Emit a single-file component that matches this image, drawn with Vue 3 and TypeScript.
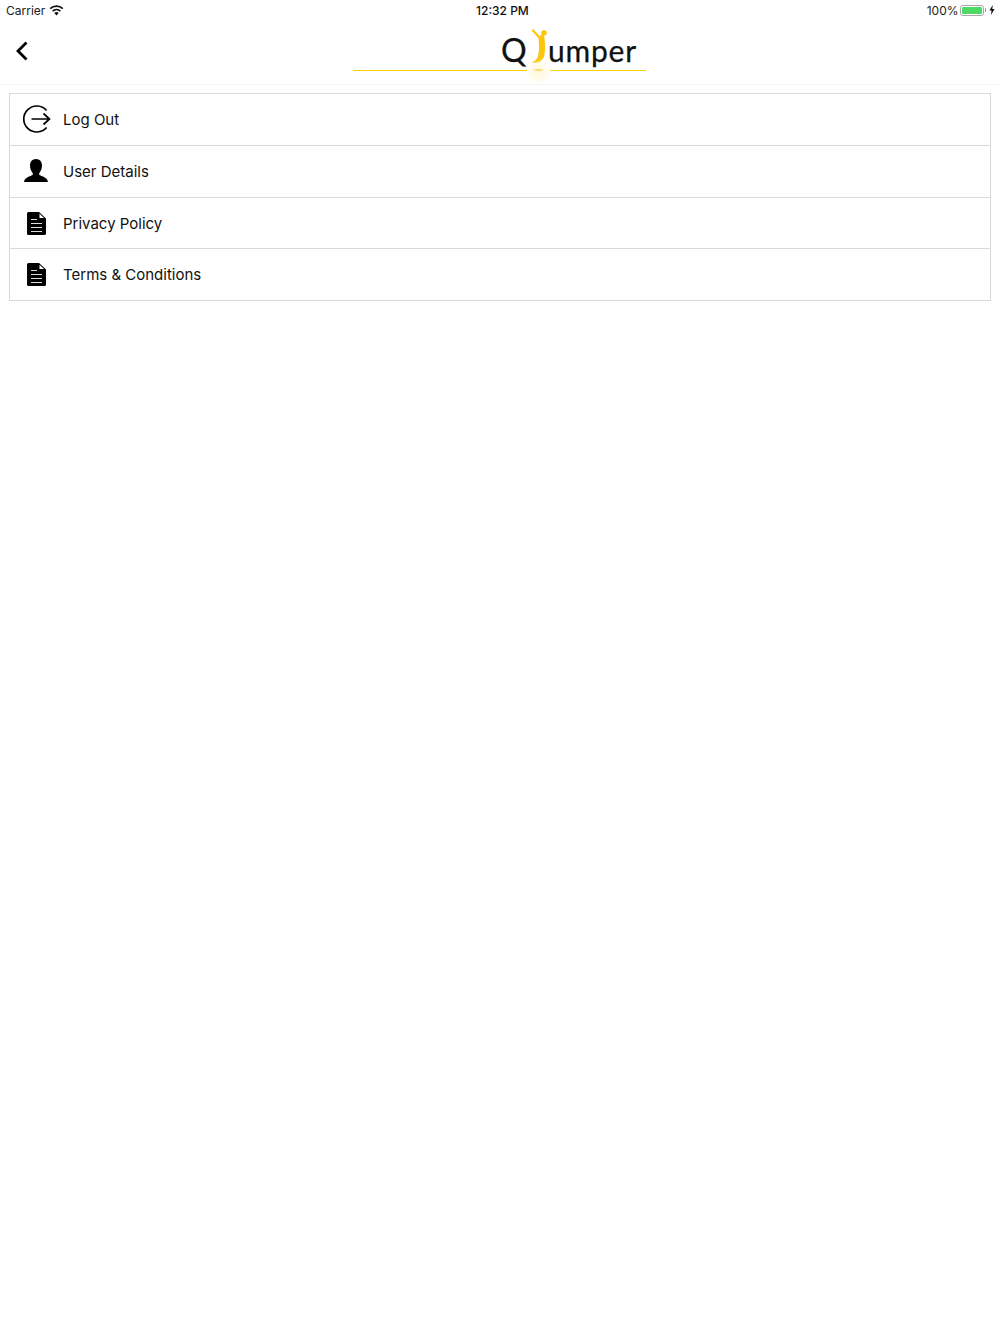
<script setup lang="ts">
interface MenuItem {
  label: string;
  icon: 'logout' | 'user' | 'doc';
}

const items: MenuItem[] = [
  { label: 'Log Out', icon: 'logout' },
  { label: 'User Details', icon: 'user' },
  { label: 'Privacy Policy', icon: 'doc' },
  { label: 'Terms & Conditions', icon: 'doc' }
];
</script>

<template>
  <div class="screen">
    <div class="status">
      <div class="status__left">
        <span>Carrier</span>
        <svg width="15" height="11" viewBox="0 0 15 11">
          <path d="M7.5 10.6 5.3 8.1a3.2 3.2 0 0 1 4.4 0Z" fill="#111" />
          <path d="M3.6 6.2a5.8 5.8 0 0 1 7.8 0" fill="none" stroke="#111" stroke-width="1.7" />
          <path d="M1.2 3.6a9.2 9.2 0 0 1 12.6 0" fill="none" stroke="#111" stroke-width="1.7" />
        </svg>
      </div>
      <span class="status__time">12:32 PM</span>
      <div class="status__right">
        <span>100%</span>
        <div class="battery"><div class="battery__fill"></div></div>
        <div class="battery__tip"></div>
        <svg class="bolt" width="6" height="10" viewBox="0 0 6 10">
          <path d="M3.8 0 0.4 5.6h2.1L2 10l3.6-6H3.3Z" fill="#111" />
        </svg>
      </div>
    </div>

    <header class="nav">
      <button class="nav__back" type="button" aria-label="Back">
        <svg width="14" height="20" viewBox="0 0 14 20">
          <path d="M11.5 1.5 3 10l8.5 8.5" fill="none" stroke="#000" stroke-width="2.8" />
        </svg>
      </button>
      <div class="logo">
        <div class="logo__word">
          <span class="logo__q">Q</span>
          <svg class="logo__j" width="21" height="38" viewBox="0 0 21 38">
            <path d="M4 1.5 11 9 15 4.500" fill="none" stroke="#fcc60d" stroke-width="2.2" stroke-linecap="round" />
            <circle cx="15" cy="4" r="2.800" fill="#fcc60d" />
            <path d="M9.500 8C10 15 10.500 20 9.500 25C8.500 30 6.500 32 2.500 33.500C9.500 34.500 14 32 15.500 25.500C16.500 20 16 12 15 6Z" fill="#fcc60d" />
          </svg>
          <span class="logo__rest">umper</span>
        </div>
        <div class="logo__rule">
          <span class="logo__line logo__line--left"></span>
          <span class="logo__glow"></span>
          <span class="logo__line logo__line--right"></span>
        </div>
      </div>
    </header>

    <ul class="menu">
      <li v-for="item in items" :key="item.label" class="menu__row">
        <span class="menu__icon">
          <svg v-if="item.icon === 'logout'" width="30" height="30" viewBox="-1 0 30 30">
            <path d="M24.6 6.5A13 13 0 1 0 24.6 23.5" fill="none" stroke="#000" stroke-width="1.7" />
            <path d="M9.5 15H27.5M21.5 9.5l6 5.500-6 5.500" fill="none" stroke="#000" stroke-width="1.7" />
          </svg>
          <svg v-else-if="item.icon === 'user'" width="26" height="26" viewBox="0 0 26 26">
            <path d="M13 1c3.700 0 6 2.800 6 6.600 0 3-1.100 5.600-2.600 7.300-.5.7-.3 1.900.6 2.400 2.600 1.400 7.400 2.100 8 6.700H1c.6-4.600 5.400-5.300 8-6.700.9-.5 1.100-1.700.6-2.400C8.100 13.200 7 10.600 7 7.600 7 3.800 9.300 1 13 1Z" fill="#000" />
          </svg>
          <svg v-else width="19" height="23" viewBox="0 0 19 23">
            <path d="M1.500 0H12L19 6.500V21.500A1.500 1.500 0 0 1 17.500 23H1.500A1.500 1.500 0 0 1 0 21.500V1.500A1.500 1.500 0 0 1 1.500 0Z" fill="#000" />
            <path d="M12.500 1.800 17 6H12.500Z" fill="#fff" />
            <path d="M4 7.500H10M4 11.500H15M4 15.500H15M4 19.500H15" stroke="#dcdcdc" stroke-width="1.200" fill="none" />
          </svg>
        </span>
        <span class="menu__label">{{ item.label }}</span>
      </li>
    </ul>
  </div>
</template>

<style scoped>
.screen {
  width: 1000px;
  height: 1334px;
  background: #fff;
  font-family: Inter, "Liberation Sans", sans-serif;
  color: #111;
}

.status {
  height: 20px;
  display: flex;
  align-items: center;
  justify-content: space-between;
  padding: 0 6px;
  font-size: 12px;
  position: relative;
}

.status__left,
.status__right {
  display: flex;
  align-items: center;
}

.status__left {
  gap: 4px;
  color: #222;
}

.status__time {
  position: absolute;
  left: 476px;
  font-weight: 500;
  color: #111;
}

.status__right {
  color: #222;
}

.battery {
  width: 24px;
  height: 11px;
  margin-left: 1px;
  border: 1px solid #a8a8a8;
  border-radius: 2.5px;
  padding: 1px;
  box-sizing: border-box;
}

.battery__fill {
  height: 100%;
  background: #4cd964;
  border-radius: 1px;
}

.battery__tip {
  width: 1.500px;
  height: 4px;
  background: #9a9a9a;
  margin-left: 1px;
}

.bolt {
  margin-left: 3px;
  margin-right: -1px;
}

.nav {
  height: 64px;
  position: relative;
  display: flex;
  justify-content: center;
  border-bottom: 1px solid #f6f6f6;
}

.nav__back {
  position: absolute;
  left: 15px;
  top: 21px;
  padding: 0;
  border: 0;
  background: none;
  display: flex;
}

.logo {
  width: 293px;
  margin-right: 1px;
}

.logo__word {
  display: flex;
  align-items: flex-start;
  height: 49px;
  padding-left: 148px;
  font-family: Lato, sans-serif;
  font-size: 30px;
  color: #111;
  line-height: 60px;
  -webkit-text-stroke: 0.25px #111;
}

.logo__q {
  width: 27px;
  font-size: 32px;
}

.logo__j {
  margin-top: 9px;
  margin-left: 1px;
  flex: none;
}

.logo__rest {
  letter-spacing: 0.8px;
  margin-left: -2px;
}

.logo__rule {
  display: flex;
  align-items: center;
  height: 3px;
}

.logo__line {
  display: block;
  height: 1px;
  background: #ffcf00;
}

.logo__line--left {
  width: 174px;
}

.logo__line--right {
  width: 96px;
}

.logo__glow {
  position: relative;
  width: 23px;
  height: 3px;
  display: block;
  background: radial-gradient(ellipse 6px 1.500px at 50% 30%, #f8b800 0%, rgba(252, 211, 77, 0) 100%);
}

.logo__glow::after {
  content: "";
  position: absolute;
  left: -3px;
  right: -3px;
  top: -12px;
  height: 28px;
  background: radial-gradient(ellipse 14px 14px at 50% 50%, rgba(255, 236, 150, 0.4) 0%, rgba(255, 236, 150, 0) 100%);
}

.menu {
  list-style: none;
  margin: 8px 9px 0;
  padding: 0;
  border: 1px solid #d9d9d9;
  border-bottom: 0;
}

.menu__row {
  height: 52px;
  box-sizing: border-box;
  display: flex;
  align-items: center;
  padding-bottom: 1px;
  border-bottom: 1px solid #d9d9d9;
}

.menu__row:nth-child(n + 3) {
  padding-bottom: 0;
}

.menu__row:nth-child(3) {
  height: 51px;
}

.menu__icon {
  width: 52px;
  display: flex;
  justify-content: center;
  flex: none;
}

.menu__label {
  margin-left: 1px;
  font-size: 15px;
  color: #111;
}
</style>

<style>
html,
body {
  background: #fff;
}
</style>
